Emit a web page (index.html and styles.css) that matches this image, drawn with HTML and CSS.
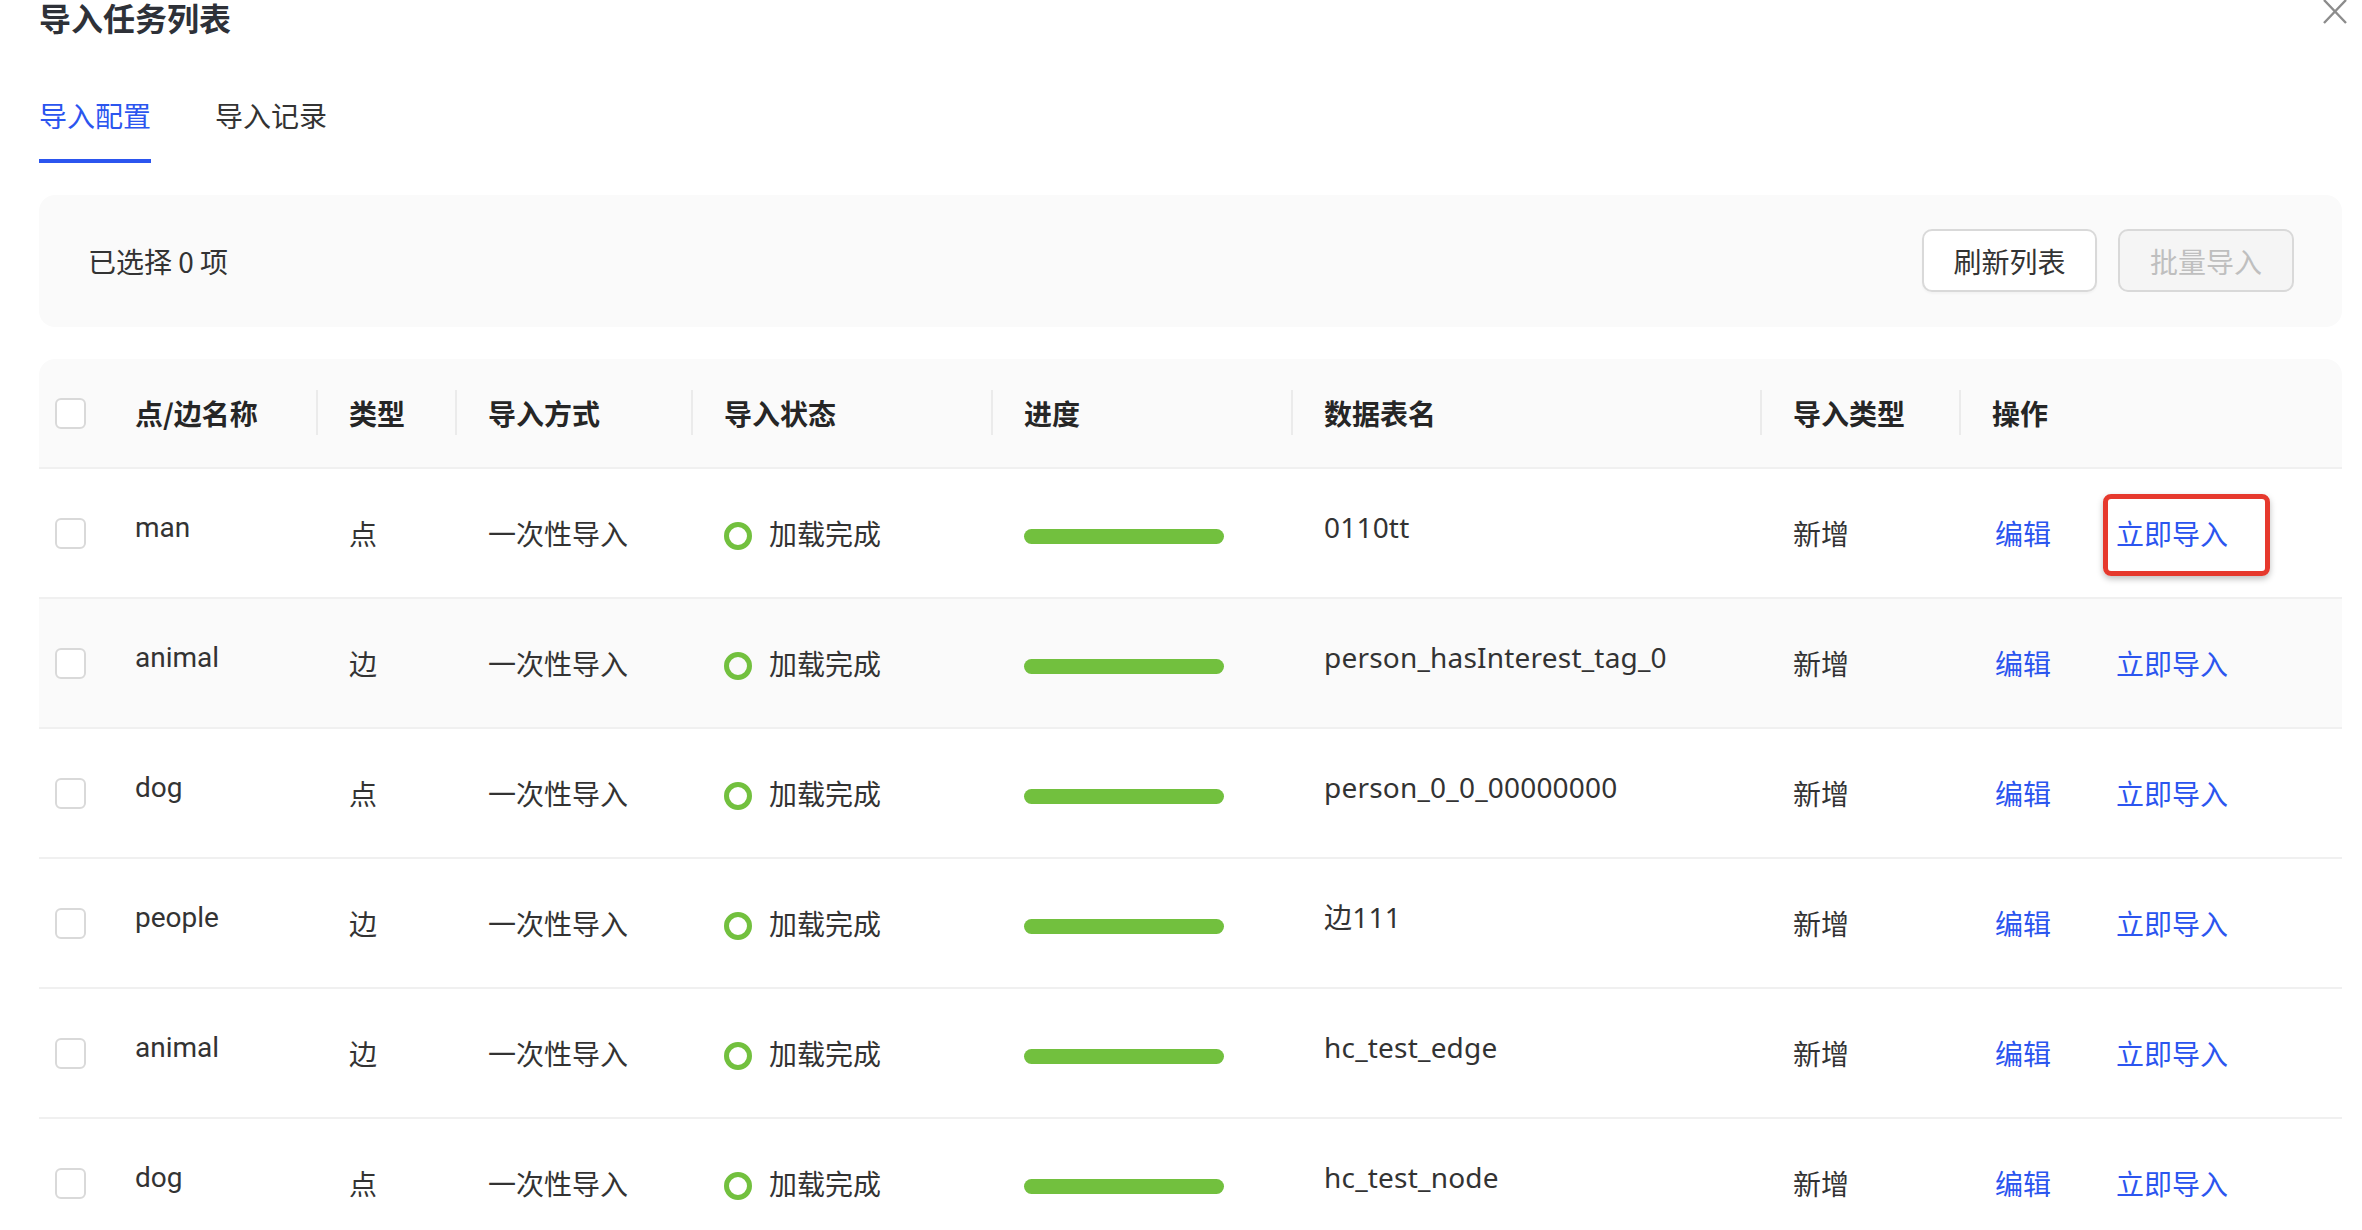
FILE: index.html
```html
<!DOCTYPE html>
<html lang="zh-CN">
<head>
<meta charset="utf-8">
<title>导入任务列表</title>
<link rel="stylesheet" href="styles.css">
</head>
<body>
<div class="modal">
  <button class="close" aria-label="关闭">
    <svg viewBox="0 0 24 24" width="24" height="24"><path d="M1 0 L23 23 M23 0 L1 23" stroke="#8c8c8c" stroke-width="2.4" fill="none"/></svg>
  </button>
  <h1 class="title">导入任务列表</h1>
  <div class="tabs">
    <div class="tab active">导入配置</div>
    <div class="tab">导入记录</div>
  </div>
  <div class="toolbar">
    <span class="selected">已选择 0 项</span>
    <div class="actions">
      <button class="btn">刷新列表</button>
      <button class="btn disabled">批量导入</button>
    </div>
  </div>
  <div class="table">
    <div class="row head">
      <div class="cell check"><span class="checkbox"></span></div>
      <div class="cell">点/边名称</div>
      <div class="cell">类型</div>
      <div class="cell">导入方式</div>
      <div class="cell">导入状态</div>
      <div class="cell">进度</div>
      <div class="cell">数据表名</div>
      <div class="cell">导入类型</div>
      <div class="cell">操作</div>
    </div>

    <div class="row">
      <div class="cell check"><span class="checkbox"></span></div>
      <div class="cell name">man</div>
      <div class="cell">点</div>
      <div class="cell">一次性导入</div>
      <div class="cell"><span class="ring"></span>加载完成</div>
      <div class="cell"><span class="bar"></span></div>
      <div class="cell tbl">0110tt</div>
      <div class="cell">新增</div>
      <div class="cell ops"><a class="link">编辑</a><a class="link flagged">立即导入</a></div>
    </div>

    <div class="row hover">
      <div class="cell check"><span class="checkbox"></span></div>
      <div class="cell name">animal</div>
      <div class="cell">边</div>
      <div class="cell">一次性导入</div>
      <div class="cell"><span class="ring"></span>加载完成</div>
      <div class="cell"><span class="bar"></span></div>
      <div class="cell tbl">person_hasInterest_tag_0</div>
      <div class="cell">新增</div>
      <div class="cell ops"><a class="link">编辑</a><a class="link">立即导入</a></div>
    </div>

    <div class="row">
      <div class="cell check"><span class="checkbox"></span></div>
      <div class="cell name">dog</div>
      <div class="cell">点</div>
      <div class="cell">一次性导入</div>
      <div class="cell"><span class="ring"></span>加载完成</div>
      <div class="cell"><span class="bar"></span></div>
      <div class="cell tbl">person_0_0_00000000</div>
      <div class="cell">新增</div>
      <div class="cell ops"><a class="link">编辑</a><a class="link">立即导入</a></div>
    </div>

    <div class="row">
      <div class="cell check"><span class="checkbox"></span></div>
      <div class="cell name">people</div>
      <div class="cell">边</div>
      <div class="cell">一次性导入</div>
      <div class="cell"><span class="ring"></span>加载完成</div>
      <div class="cell"><span class="bar"></span></div>
      <div class="cell tbl">边111</div>
      <div class="cell">新增</div>
      <div class="cell ops"><a class="link">编辑</a><a class="link">立即导入</a></div>
    </div>

    <div class="row">
      <div class="cell check"><span class="checkbox"></span></div>
      <div class="cell name">animal</div>
      <div class="cell">边</div>
      <div class="cell">一次性导入</div>
      <div class="cell"><span class="ring"></span>加载完成</div>
      <div class="cell"><span class="bar"></span></div>
      <div class="cell tbl">hc_test_edge</div>
      <div class="cell">新增</div>
      <div class="cell ops"><a class="link">编辑</a><a class="link">立即导入</a></div>
    </div>

    <div class="row">
      <div class="cell check"><span class="checkbox"></span></div>
      <div class="cell name">dog</div>
      <div class="cell">点</div>
      <div class="cell">一次性导入</div>
      <div class="cell"><span class="ring"></span>加载完成</div>
      <div class="cell"><span class="bar"></span></div>
      <div class="cell tbl">hc_test_node</div>
      <div class="cell">新增</div>
      <div class="cell ops"><a class="link">编辑</a><a class="link">立即导入</a></div>
    </div>
  </div>
</div>
</body>
</html>
```

FILE: styles.css
```css
html, body {
  margin: 0;
  padding: 0;
  overflow: hidden;
  background: #fff;
}

body {
  font-family: "Noto Sans CJK SC", "Noto Sans", sans-serif;
  color: #333;
  font-size: 28px;
}

.modal {
  position: relative;
  padding: 0 20px 0 39px;
}

.close {
  position: absolute;
  top: 0;
  right: 15px;
  width: 24px;
  height: 24px;
  padding: 0;
  border: 0;
  background: transparent;
}

.close svg {
  display: block;
}

.title {
  margin: 0;
  font-size: 32px;
  line-height: 34px;
  font-weight: 600;
  color: #2e3138;
}

.tabs {
  display: flex;
  gap: 64px;
  margin-top: 61px;
}

.tab {
  font-size: 28px;
  line-height: 40px;
  padding-bottom: 24px;
  border-bottom: 4px solid transparent;
  color: #333;
}

.tab.active {
  color: #2b55ef;
  border-bottom-color: #2b55ef;
}

.toolbar {
  margin-top: 32px;
  background: #fafafa;
  border-radius: 16px;
  display: flex;
  align-items: center;
  justify-content: space-between;
  padding: 34px 48px 35px 49px;
}

.selected {
  font-size: 28px;
  line-height: 40px;
}

.actions {
  display: flex;
  gap: 21px;
}

.btn {
  box-sizing: border-box;
  width: 175px;
  height: 63px;
  border: 2px solid #d9d9d9;
  border-radius: 10px;
  background: #fff;
  font-family: "Noto Sans CJK SC", sans-serif;
  font-size: 28px;
  color: #333;
  box-shadow: 0 2px 2px rgba(0, 0, 0, 0.03);
  padding: 0;
}

.btn.disabled {
  width: 176px;
  background: #f5f5f5;
  color: #bfbfbf;
  box-shadow: none;
}

.table {
  margin-top: 32px;
}

.row {
  display: grid;
  grid-template-columns: 63px 214px 139px 236px 300px 300px 469px 199px 1fr;
  height: 128px;
  border-bottom: 2px solid #f0f0f0;
}

.row.head {
  height: 108px;
  background: #fafafa;
  border-radius: 16px 16px 0 0;
  font-weight: 600;
  color: #262626;
}

.row.hover {
  background: #fafafa;
}

.cell {
  position: relative;
  display: flex;
  align-items: center;
  padding-left: 33px;
  line-height: 40px;
  white-space: nowrap;
}

.head .cell:nth-child(n+3)::before {
  content: "";
  position: absolute;
  left: 0;
  top: 50%;
  width: 2px;
  height: 45px;
  margin-top: -23px;
  background: #ebebeb;
}

.cell.check {
  padding-left: 16px;
}

.checkbox {
  box-sizing: border-box;
  width: 31px;
  height: 31px;
  border: 2px solid #d9d9d9;
  border-radius: 6px;
  background: #fff;
}

.cell.name {
  font-family: Roboto, "Noto Sans CJK SC", sans-serif;
  padding-bottom: 10px;
}

.cell.tbl {
  font-family: "Noto Sans", "Noto Sans CJK SC", sans-serif;
  padding-bottom: 12px;
  letter-spacing: 0.2px;
}

.ring {
  box-sizing: border-box;
  width: 28px;
  height: 28px;
  border: 5px solid #72c03e;
  border-radius: 50%;
  margin-right: 17px;
  margin-top: 6px;
}

.bar {
  width: 200px;
  height: 15px;
  border-radius: 8px;
  background: #72c03e;
  margin-top: 6px;
}

.ops {
  gap: 65px;
  padding-left: 36px;
}

.link {
  position: relative;
  color: #2b55ef;
  cursor: pointer;
}

.link.flagged::after {
  content: "";
  position: absolute;
  left: -13px;
  top: -19px;
  width: 167px;
  height: 82px;
  box-sizing: border-box;
  border: 5px solid #e6392d;
  border-radius: 8px;
  box-shadow: 0 3px 6px rgba(0, 0, 0, 0.25);
}
```
